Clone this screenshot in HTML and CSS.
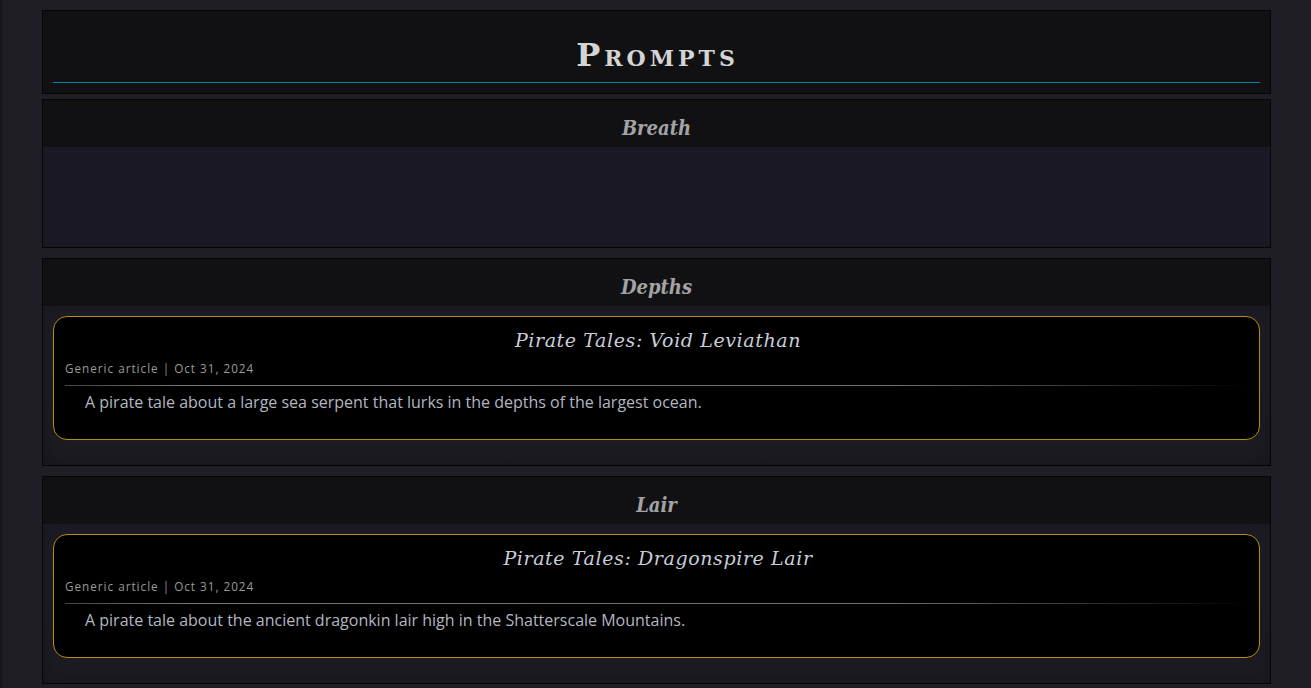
FILE: index.html
```html
<!DOCTYPE html>
<html lang="en">
<head>
<meta charset="utf-8">
<title>Prompts</title>
<link rel="stylesheet" href="styles.css">
</head>
<body>
<main class="page">
  <header class="panel title-panel">
    <h1 class="page-title">Prompts</h1>
  </header>

  <section class="panel section section-empty">
    <h2 class="section-title">Breath</h2>
    <div class="section-body"></div>
  </section>

  <section class="panel section">
    <h2 class="section-title">Depths</h2>
    <div class="section-body">
      <article class="card">
        <h3 class="card-title">Pirate Tales: Void Leviathan</h3>
        <div class="card-meta">Generic article | Oct 31, 2024</div>
        <div class="card-rule"></div>
        <p class="card-desc">A pirate tale about a large sea serpent that lurks in the depths of the largest ocean.</p>
      </article>
    </div>
  </section>

  <section class="panel section">
    <h2 class="section-title">Lair</h2>
    <div class="section-body">
      <article class="card">
        <h3 class="card-title">Pirate Tales: Dragonspire Lair</h3>
        <div class="card-meta">Generic article | Oct 31, 2024</div>
        <div class="card-rule"></div>
        <p class="card-desc">A pirate tale about the ancient dragonkin lair high in the Shatterscale Mountains.</p>
      </article>
    </div>
  </section>
</main>
</body>
</html>
```

FILE: styles.css
```css
html, body {
  margin: 0;
  padding: 0;
}
body {
  background: #201e25;
  box-shadow: inset 3px 0 0 #18171c;
  min-height: 688px;
  font-family: "Open Sans", "Noto Sans", sans-serif;
}
.page {
  width: 1229px;
  margin-left: 42px;
  padding-top: 10px;
  display: flex;
  flex-direction: column;
}
.panel {
  border: 1px solid #050506;
  background: #111113;
}
.title-panel {
  padding: 0 10px 10px;
}
.page-title {
  margin: 0;
  height: 71px;
  box-sizing: border-box;
  padding: 24px 0 0 2px;
  text-align: center;
  font-family: "DejaVu Serif", serif;
  font-variant: small-caps;
  font-weight: bold;
  font-size: 32px;
  line-height: 40px;
  letter-spacing: 4px;
  color: #d4d4d4;
}
.title-panel::after {
  content: "";
  display: block;
  height: 1px;
  background: #0b80a6;
}
.section {
  margin-top: 10px;
}
.section-empty {
  margin-top: 5px;
}
.section-title {
  margin: 0;
  height: 47px;
  line-height: 56px;
  text-align: center;
  font-family: "DejaVu Serif Condensed", "DejaVu Serif", serif;
  font-style: italic;
  font-weight: bold;
  font-size: 20px;
  color: #a3a3a6;
  background: #111113;
}
.section-body {
  background: linear-gradient(#1e1d26, #1c1b22);
  padding: 10px 10px 25px;
  box-shadow: inset 0 0 20px rgba(0, 0, 0, 0.25);
}
.section-empty .section-body {
  background: #191823;
  height: 100px;
  box-sizing: border-box;
  box-shadow: none;
}
.card {
  background: #000;
  border: 1px solid #b48f0c;
  border-radius: 14px;
  padding: 8px 8px 26px 11px;
}
.card-title {
  margin: 0;
  text-align: center;
  font-family: "DejaVu Serif", serif;
  font-style: italic;
  font-weight: normal;
  font-size: 19px;
  line-height: 30px;
  letter-spacing: 0.6px;
  color: #c9cdd8;
}
.card-meta {
  margin-top: 5px;
  font-size: 11.7px;
  line-height: 17px;
  letter-spacing: 1px;
  color: #9c9a98;
}
.card-rule {
  margin-top: 8px;
  height: 1px;
  background: linear-gradient(to right, #444446, #757577 10%, #6e6e70 70%, rgba(80, 80, 80, 0));
}
.card-desc {
  margin: 5px 0 0 20px;
  font-size: 16px;
  line-height: 22px;
  color: #b2b6c2;
}
```
